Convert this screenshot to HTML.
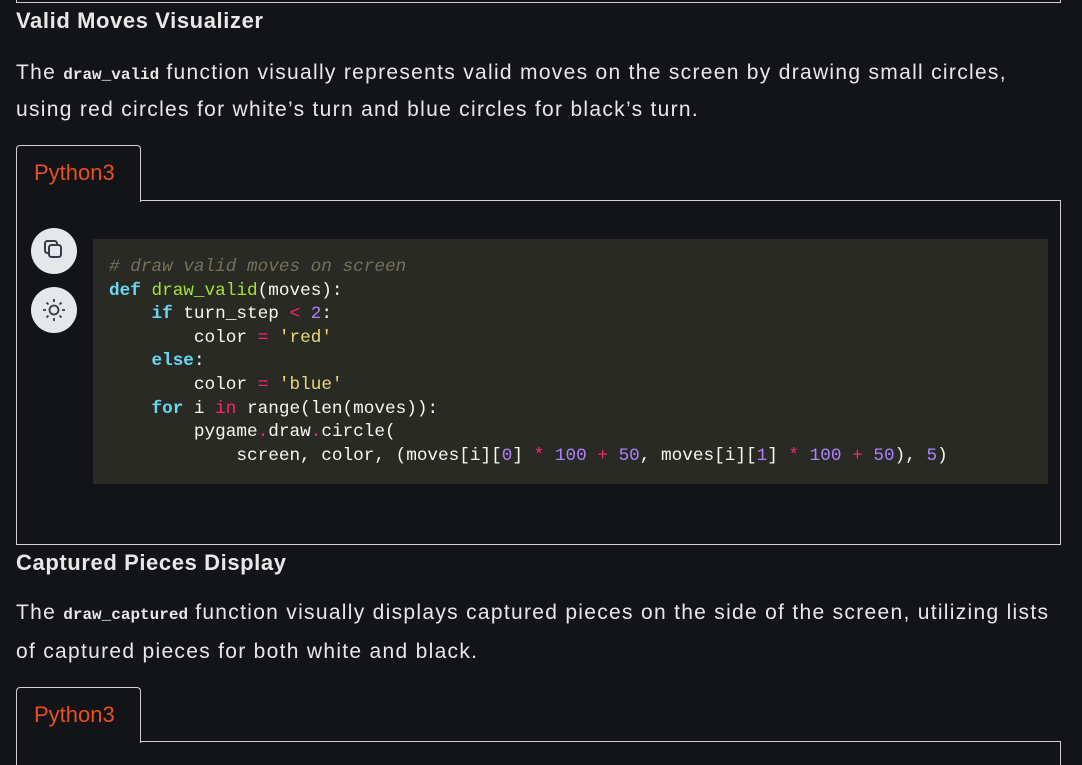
<!DOCTYPE html>
<html><head><meta charset="utf-8"><style>
html,body{overflow:hidden}
body{margin:0;width:1082px;height:765px;background:#131417;color:#e8e8e8;font-family:"Liberation Sans",sans-serif;position:relative;overflow:hidden}
.a{position:absolute;white-space:nowrap}
h3{margin:0;font-size:22px;font-weight:bold;letter-spacing:0.6px}
.p{font-size:21px;letter-spacing:1.3px}
.p code{font-family:"Liberation Mono",monospace;font-size:16px;font-weight:bold;letter-spacing:0}
.box{position:absolute;border:1px solid #d0d0d0}
.tab{position:absolute;border:1px solid #d0d0d0;border-bottom:none;border-radius:4px 4px 0 0;background:#131417;color:#e9501f;font-size:22px;box-sizing:border-box;padding:14px 0 0 17px}
.btn{position:absolute;width:46px;height:46px;border-radius:50%;background:#e6e7ea}
pre{position:absolute;left:93px;top:239px;width:955px;height:245px;margin:0;background:#2a2a25;box-sizing:border-box;padding:17px 16px;font-family:"Liberation Mono",monospace;font-size:17.7px;line-height:23.6px;color:#f8f8f2}
.k{color:#66d9ef;font-weight:bold}.f{color:#a6e22e}.s{color:#e6db74}.n{color:#ae81ff}.o{color:#f92672}.c{color:#75715e;font-style:italic}
</style></head><body>
<div class="box" style="left:16px;top:-20px;width:1043px;height:21px"></div>
<h3 class="a" style="left:16px;top:8px">Valid Moves Visualizer</h3>
<div class="a p" style="left:16px;top:61px">The <code>draw_valid</code> function visually represents valid moves on the screen by drawing small circles,</div>
<div class="a p" style="left:16px;top:98px">using red circles for white’s turn and blue circles for black’s turn.</div>
<div class="box" style="left:16px;top:200px;width:1043px;height:343px"></div>
<div class="tab" style="left:16px;top:145px;width:125px;height:57px">Python3</div>
<div class="btn" style="left:31px;top:228px"><svg width="46" height="46" viewBox="0 0 46 46"><rect x="14" y="13" width="12" height="12" rx="2.5" fill="none" stroke="#333c48" stroke-width="2"/><rect x="18" y="17" width="12" height="12" rx="2.5" fill="#e6e7ea" stroke="#333c48" stroke-width="2"/></svg></div>
<div class="btn" style="left:31px;top:287px"><svg width="46" height="46" viewBox="0 0 46 46" stroke="#333c48" stroke-width="1.8" fill="none"><circle cx="23" cy="23" r="4.5"/><path d="M23 12v3M23 31v3M12 23h3M31 23h3M15.5 15.5l2 2M28.5 28.5l2 2M15.5 30.5l2-2M28.5 17.5l2-2"/></svg></div>
<pre><span class="c"># draw valid moves on screen</span>
<span class="k">def</span> <span class="f">draw_valid</span>(moves):
    <span class="k">if</span> turn_step <span class="o">&lt;</span> <span class="n">2</span>:
        color <span class="o">=</span> <span class="s">'red'</span>
    <span class="k">else</span>:
        color <span class="o">=</span> <span class="s">'blue'</span>
    <span class="k">for</span> i <span class="o">in</span> range(len(moves)):
        pygame<span class="o">.</span>draw<span class="o">.</span>circle(
            screen, color, (moves[i][<span class="n">0</span>] <span class="o">*</span> <span class="n">100</span> <span class="o">+</span> <span class="n">50</span>, moves[i][<span class="n">1</span>] <span class="o">*</span> <span class="n">100</span> <span class="o">+</span> <span class="n">50</span>), <span class="n">5</span>)</pre>
<h3 class="a" style="left:16px;top:550px">Captured Pieces Display</h3>
<div class="a p" style="left:16px;top:601px">The <code>draw_captured</code> function visually displays captured pieces on the side of the screen, utilizing lists</div>
<div class="a p" style="left:16px;top:640px">of captured pieces for both white and black.</div>
<div class="box" style="left:16px;top:741px;width:1043px;height:40px"></div>
<div class="tab" style="left:16px;top:687px;width:125px;height:56px">Python3</div>
</body></html>
